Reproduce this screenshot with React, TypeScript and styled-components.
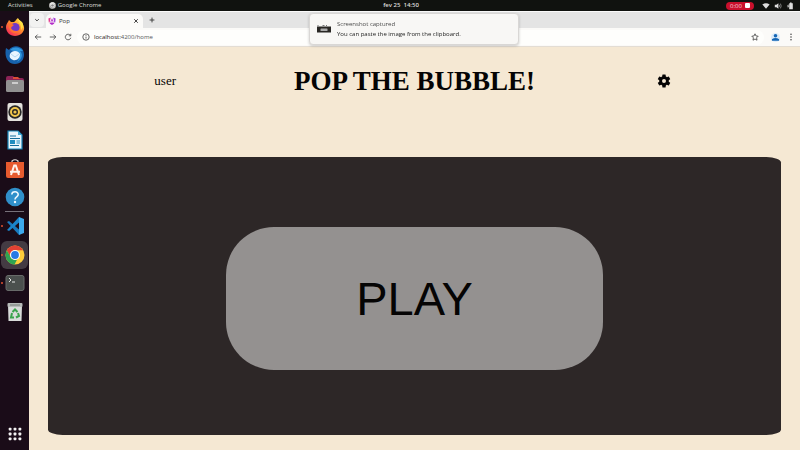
import React from 'react';
import styled, { createGlobalStyle } from 'styled-components';

const GlobalStyle = createGlobalStyle`
  * { box-sizing: border-box; }
  html, body, #root { height: 100%; }
  body { margin: 0; overflow: hidden; font-family: "Open Sans", "Noto Sans", sans-serif; }
  button { border: 0; padding: 0; background: none; color: inherit; font: inherit; cursor: pointer; }
  svg { display: block; }
`;

const Desktop = styled.div`
  display: grid;
  grid-template: 11px minmax(0, 1fr) / 29px minmax(0, 1fr);
  height: 100vh;
  background: #1a0c18;
`;

const TopBar = styled.header`
  grid-column: 1 / -1;
  display: grid;
  grid-template-columns: 1fr auto 1fr;
  align-items: center;
  padding: 0 6px 0 8px;
  background: #10120f;
  color: #dededc;
  font-size: 6px;
  line-height: 11px;
`;

const BarGroup = styled.div<{ $end?: boolean; $gap: number }>`
  display: flex;
  align-items: center;
  justify-content: ${(p) => (p.$end ? 'flex-end' : 'flex-start')};
  gap: ${(p) => p.$gap}px;
`;

const AppMenu = styled.button`
  display: flex;
  align-items: center;
  gap: 2px;
  font-weight: 500;
`;

const Clock = styled.button`
  font-weight: 600;
`;

const Recording = styled.button`
  display: flex;
  align-items: center;
  justify-content: center;
  gap: 3px;
  width: 28px;
  height: 8px;
  margin-right: 4px;
  border-radius: 4px;
  background: #c9102c;
  color: #f6d5da;
  line-height: 8px;
`;

const StopMark = styled.span`
  width: 5px;
  height: 5px;
  border-radius: 1px;
  background: #fff;
`;

const Dock = styled.nav`
  display: flex;
  flex-direction: column;
  align-items: center;
  padding: 2px 0;
`;

const DockGroup = styled.div<{ $height: number }>`
  display: flex;
  flex-direction: column;
  justify-content: space-between;
  height: ${(p) => p.$height}px;
`;

const DockButton = styled.button<{ $active?: boolean; $running?: boolean }>`
  position: relative;
  display: grid;
  place-items: center;
  width: 27px;
  height: 28px;
  border-radius: 6px;
  background: ${(p) => (p.$active ? '#443b43' : 'transparent')};
  &::before {
    content: '';
    display: ${(p) => (p.$running ? 'block' : 'none')};
    position: absolute;
    left: 0;
    top: 13px;
    width: 2px;
    height: 2px;
    border-radius: 1px;
    background: #e0512f;
  }
`;

const DockDivider = styled.hr`
  width: 19px;
  height: 1px;
  margin: 0;
  border: 0;
  background: #77717a;
`;

const DockSpacer = styled.div`
  flex: 1;
`;

const Browser = styled.main`
  display: grid;
  grid-template-rows: 17px 19px minmax(0, 1fr);
  min-width: 0;
`;

const TabStrip = styled.div`
  display: flex;
  align-items: stretch;
  gap: 2px;
  border-top: 1px solid #fafafa;
  background: #e4e4e4;
  color: #333;
`;

const TabSearch = styled.button`
  display: grid;
  place-items: center;
  width: 14px;
  height: 14px;
  margin: 1px 0 0 1px;
  border-radius: 4px;
  background: #f2f2f1;
`;

const Tab = styled.div`
  display: flex;
  align-items: center;
  gap: 3px;
  width: 97px;
  margin-right: 2px;
  margin-top: 2px;
  padding: 0 3px 1px 2px;
  border-radius: 5px 5px 0 0;
  background: #fbfaf8;
  font-size: 6px;
`;

const TabTitle = styled.span`
  flex: 1;
`;

const IconButton = styled.button`
  display: grid;
  place-items: center;
  flex: none;
  width: 9px;
`;

const Toolbar = styled.div`
  display: flex;
  align-items: center;
  padding: 0 5px 0 4px;
  border-bottom: 1px solid #e3ddd4;
  background: #fbfaf8;
  color: #404040;
`;

const NavButtons = styled.div`
  display: flex;
  gap: 6px;
`;

const AddressBar = styled.form`
  display: flex;
  flex: 1;
  align-items: center;
  gap: 4px;
  height: 15px;
  margin: 0 7px 0 5px;
  padding: 0 5px 0 4px;
  border-radius: 8px;
  background: #fefefc;
`;

const AddressField = styled.label`
  display: grid;
  flex: 1;
  align-items: center;
  font-size: 6px;
  line-height: 10px;
`;

const AddressInput = styled.input`
  grid-area: 1 / 1;
  width: 100%;
  min-width: 0;
  padding: 0;
  border: 0;
  outline: 0;
  background: transparent;
  color: transparent;
  caret-color: #333;
  font: inherit;
`;

const AddressText = styled.span`
  grid-area: 1 / 1;
  color: #55585a;
  pointer-events: none;
`;

const Host = styled.span`
  color: #1c1617;
`;

const ToolbarEnd = styled.div`
  display: flex;
  gap: 6px;
`;

const Page = styled.section`
  display: flex;
  flex-direction: column;
  align-items: center;
  padding-bottom: 15px;
  background: #f5e8d3;
  color: #050404;
  font-family: "Liberation Serif", serif;
`;

const PageHeader = styled.header`
  display: grid;
  grid-template-columns: repeat(3, 1fr);
  align-items: center;
  justify-items: center;
  width: 97%;
  height: 68px;
  margin-bottom: 42px;
`;

const UserLink = styled.a`
  color: inherit;
  font-size: 13px;
  text-decoration: none;
`;

const Title = styled.h1`
  margin: 0;
  font-size: 27px;
  line-height: 32px;
  white-space: nowrap;
`;

const Board = styled.div`
  display: grid;
  place-items: center;
  flex: 1;
  width: 95%;
  padding: 4px 0 0;
  border-radius: 2%;
  background: #2d2727;
`;

const PlayButton = styled.button`
  && {
    width: 377px;
    max-width: 80%;
    padding: 44px 0;
    border-radius: 48px;
    background: #949190;
    color: #050404;
    font-family: "Liberation Sans", sans-serif;
    font-size: 47px;
    line-height: 55px;
  }
`;

const Notification = styled.aside`
  position: fixed;
  top: 13px;
  left: 50%;
  display: flex;
  align-items: center;
  gap: 6px;
  width: 210px;
  height: 32px;
  margin-left: -91px;
  padding: 0 7px;
  border: 1px solid #d9d7d5;
  border-radius: 4px;
  background: #f8f7f5;
  box-shadow: 0 1px 3px #0003;
  color: #222;
  font-size: 6px;
  line-height: 10px;
`;

const NoticeText = styled.p`
  margin: 0;
  white-space: nowrap;
`;

const NoticeTitle = styled(NoticeText)`
  color: #4a4a4a;
`;

type IconProps = { size?: number; children: React.ReactNode };

const Icon = ({ size = 20, children }: IconProps) => (
  <svg width={size} height={size} viewBox="0 0 20 20" fill="none" aria-hidden="true">{children}</svg>
);

const Line = ({ d, size = 8, width = 2 }: { d: string; size?: number; width?: number }) => (
  <Icon size={size}><path d={d} stroke="currentColor" strokeWidth={width} /></Icon>
);

const Firefox = () => (
  <Icon>
    <defs>
      <linearGradient id="fox" x1="16" y1="2" x2="4" y2="18" gradientUnits="userSpaceOnUse">
        <stop stopColor="#ffe14a" /><stop offset=".45" stopColor="#ff8a2b" /><stop offset="1" stopColor="#f5285b" />
      </linearGradient>
    </defs>
    <path d="M3 5L4 3 6 5 9 5C11 4 11 2 13 1C14 4 18 5 19 10C20 15 15 19 10 19C5 19 1 15 1 10C1 8 2 6 3 5Z" fill="url(#fox)" />
    <circle cx="10" cy="10.5" r="4.6" fill="#7138c9" />
    <path d="M3 7C5 6 7 7 9 8C8 9 7 9 6 11C7 14 12 15 14 13C13 17 7 17 5 13Z" fill="#ff7130" />
    <path d="M13 2C13 6 17 7 16 13C18 11 19 8 17 5Z" fill="#ffdf43" />
  </Icon>
);

const Thunderbird = () => (
  <Icon>
    <path d="M1 3L4 5C7 0 15 0 18 5C21 12 17 19 10 19C3 19-1 12 1 3Z" fill="#1761ac" />
    <path d="M5 5C9 1 15 2 18 6L15 6C19 10 16 15 12 17C16 12 14 8 9 6Z" fill="#3197df" />
    <path d="M5 9C7 5 13 5 15 9C15 13 12 16 8 15C5 14 4 12 5 9Z" fill="#e9f5ff" />
    <path d="M6 9L10 12 14 9" stroke="#b4d8f3" />
  </Icon>
);

const Files = () => (
  <Icon>
    <path d="M1 4Q1 2 3 2H8L10 4H17Q19 4 19 6V9H1Z" fill="#8d2457" />
    <path d="M8 3H13L15 5H8Z" fill="#dd4b36" />
    <rect x="1" y="6" width="18" height="12" rx="1.5" fill="#919191" />
    <path d="M7 9H13" stroke="#eee" strokeWidth="1.3" />
  </Icon>
);

const Rhythmbox = () => (
  <Icon>
    <rect x="2.5" y="1" width="15" height="18" rx="2" fill="#e4e2dd" />
    <circle cx="10" cy="10" r="6.7" fill="#272625" />
    <circle cx="10" cy="10" r="4" stroke="#f3c74c" strokeWidth="2" />
    <circle cx="10" cy="10" r="1.6" fill="#f3c74c" />
  </Icon>
);

const Writer = () => (
  <Icon>
    <path d="M3 1H13L17 5V19H3Z" fill="#e9f5fb" stroke="#1684b8" strokeWidth="1.2" />
    <path d="M13 1V5H17Z" fill="#45a9d3" />
    <path d="M5 6H11M5 8.5H15M5 15.5H14" stroke="#176e9b" strokeWidth="1.2" />
    <rect x="5" y="10" width="5" height="4" fill="#218dbf" />
    <path d="M11.5 11H15M11.5 13H15" stroke="#218dbf" />
  </Icon>
);

const Software = () => (
  <Icon>
    <path d="M7 4V2Q10-.5 13 2V4" stroke="#dddad7" strokeWidth="1.2" />
    <path d="M1 3H19V17Q19 19 17 19H3Q1 19 1 17Z" fill="#e65a2e" />
    <path d="M6 16L9.2 6.5H10.8L14 16M5 12.8H15" stroke="#fff3ec" strokeWidth="2" />
  </Icon>
);

const Help = () => (
  <Icon>
    <circle cx="10" cy="10" r="9.3" fill="#308fca" />
    <path d="M6.8 7.5C7 3.8 13.4 4 13.2 7.6C13.2 10 10 9.8 10 12.5" stroke="#eef8ff" strokeWidth="1.6" />
    <circle cx="10" cy="15" r="1.2" fill="#eef8ff" />
  </Icon>
);

const Code = () => (
  <Icon>
    <path d="M2 6L4 5 17 16 14 19Z" fill="#1879bd" />
    <path d="M2 14L4 15 17 4 14 1Z" fill="#1a85cb" />
    <path d="M14 1L19 3V17L14 19Z" fill="#3da9ed" />
  </Icon>
);

const Chrome = ({ size = 20, mono = false }: { size?: number; mono?: boolean }) => (
  <Icon size={size}>
    <circle cx="10" cy="10" r="9.5" fill={mono ? '#c4c4c2' : '#ffce3b'} />
    <path d="M1.8 5.2C5.4-1.2 14.6-1.2 18.2 5.2H10A5 5 0 0 0 5.7 12.4Z" fill={mono ? '#e5e5e3' : '#e34134'} />
    <path d="M1.8 5.2L5.8 12.3Q8 15.5 12 14.7L9.5 19.5C2 19-1.5 11.3 1.8 5.2Z" fill={mono ? '#a9a9a7' : '#2fa552'} />
    <circle cx="10" cy="10" r="5" fill="#fff" />
    <circle cx="10" cy="10" r="3.9" fill={mono ? '#888' : '#2879e5'} />
  </Icon>
);

const Terminal = () => (
  <Icon>
    <rect x="1" y="2.5" width="18" height="15" rx="2" fill="#4b504e" stroke="#686b69" />
    <path d="M4 5L6 7 4 9M7 9H10" stroke="#e5e5e5" />
  </Icon>
);

const Trash = () => (
  <Icon>
    <path d="M3 3H17L16.5 19H3.5Z" fill="#d9dcda" />
    <rect x="2.5" y="1" width="15" height="4" rx="1" fill="#b7bbb9" />
    <path d="M5 3H15" stroke="#777c79" />
    <path d="M7.5 10L10 7.5 12.5 10M13 11L14 14 11 15.5M9 15.5H6L7 11" stroke="#3aa44c" strokeWidth="2" />
  </Icon>
);

const AppGrid = () => (
  <Icon size={14}>
    {[1, 8, 15].flatMap((y) => [1, 8, 15].map((x) => (
      <rect key={`${x}-${y}`} x={x} y={y} width="4" height="4" rx="1" fill="#f3f1f2" />
    )))}
  </Icon>
);

const Angular = () => (
  <Icon size={8}>
    <path d="M7 1L1 4 2 14 4 14Z" fill="#e43a8e" />
    <path d="M13 1L19 4 18 14 16 14Z" fill="#a33bd9" />
    <path d="M10 3L14 12H6ZM4 16L10 20 16 16 14 14H6Z" fill="#b52cc9" />
    <path d="M10 8L12 12H8Z" fill="#fff" />
  </Icon>
);

const Gear = () => (
  <svg width="16" height="16" viewBox="0 0 24 24" fill="currentColor" aria-hidden="true">
    <path d="M19.14 12.94c.04-.3.06-.61.06-.94s-.02-.64-.07-.94l2.03-1.58a.49.49 0 0 0 .12-.61l-1.92-3.32a.49.49 0 0 0-.59-.22l-2.39.96a7 7 0 0 0-1.62-.94l-.36-2.54a.48.48 0 0 0-.48-.41h-3.84a.48.48 0 0 0-.47.41l-.36 2.54c-.59.24-1.13.57-1.62.94l-2.39-.96a.48.48 0 0 0-.59.22L2.74 8.87a.47.47 0 0 0 .12.61l2.03 1.58a6 6 0 0 0 0 1.88l-2.03 1.58a.49.49 0 0 0-.12.61l1.92 3.32c.12.22.37.29.59.22l2.39-.96c.5.38 1.03.7 1.62.94l.36 2.54c.05.24.24.41.48.41h3.84c.24 0 .44-.17.47-.41l.36-2.54a7 7 0 0 0 1.62-.94l2.39.96c.22.08.47 0 .59-.22l1.92-3.32a.47.47 0 0 0-.12-.61zM12 15a3 3 0 1 1 0-6 3 3 0 0 1 0 6z" />
  </svg>
);

const pinned = [
  { name: 'Firefox', icon: <Firefox />, running: true },
  { name: 'Thunderbird', icon: <Thunderbird /> },
  { name: 'Files', icon: <Files /> },
  { name: 'Rhythmbox', icon: <Rhythmbox /> },
  { name: 'Writer', icon: <Writer /> },
  { name: 'Software', icon: <Software /> },
  { name: 'Help', icon: <Help /> },
];

const open = [
  { name: 'Code', icon: <Code />, running: true },
  { name: 'Google Chrome', icon: <Chrome />, running: true, active: true },
  { name: 'Terminal', icon: <Terminal />, running: true },
  { name: 'Trash', icon: <Trash /> },
];

export default function App() {
  return (
    <>
      <GlobalStyle />
      <Desktop>
        <TopBar>
          <BarGroup $gap={16}>
            <button>Activities</button>
            <AppMenu><Chrome size={7} mono />Google Chrome</AppMenu>
          </BarGroup>
          <Clock>fev 25&nbsp; 14:50</Clock>
          <BarGroup $end $gap={4}>
            <Recording aria-label="Stop recording">0:00<StopMark /></Recording>
            <Icon size={8}><path d="M1 6Q10 0 19 6L10 17Z" fill="#ddd" /></Icon>
            <Icon size={8}><path d="M2 7H6L11 3V17L6 13H2Z" fill="#ddd" /><path d="M13 7Q15 10 13 13M16 4Q20 10 16 16" stroke="#999" strokeWidth="2" /></Icon>
            <Icon size={8}><path d="M8 3H10V1H14V3H17V18H8Z" fill="#ddd" /><path d="M6 5L2 11H5L4 16L9 9H6Z" fill="#bbb" /></Icon>
          </BarGroup>
        </TopBar>

        <Dock aria-label="Dock">
          <DockGroup $height={198}>
            {pinned.map((a) => (
              <DockButton key={a.name} aria-label={a.name} $running={a.running}>{a.icon}</DockButton>
            ))}
          </DockGroup>
          <DockDivider />
          <DockGroup $height={114}>
            {open.map((a) => (
              <DockButton key={a.name} aria-label={a.name} $running={a.running} $active={a.active}>{a.icon}</DockButton>
            ))}
          </DockGroup>
          <DockSpacer />
          <DockButton aria-label="Show applications"><AppGrid /></DockButton>
        </Dock>

        <Browser>
          <TabStrip>
            <TabSearch aria-label="Search tabs"><Line size={6} width={3} d="M4 7L10 13L16 7" /></TabSearch>
            <Tab>
              <Angular />
              <TabTitle>Pop</TabTitle>
              <IconButton aria-label="Close tab"><Line size={6} width={3} d="M4 4L16 16M16 4L4 16" /></IconButton>
            </Tab>
            <IconButton aria-label="New tab"><Line size={6} width={3} d="M10 2V18M2 10H18" /></IconButton>
          </TabStrip>
          <Toolbar>
            <NavButtons>
              <IconButton aria-label="Back"><Line d="M18 10H3M9 4L3 10L9 16" /></IconButton>
              <IconButton aria-label="Forward"><Line d="M2 10H17M11 4L17 10L11 16" /></IconButton>
              <IconButton aria-label="Reload"><Line d="M16 6A7 7 0 1 0 17 12M17 2V7H12" /></IconButton>
            </NavButtons>
            <AddressBar>
              <IconButton type="button" aria-label="Site information"><Line d="M10 2A8 8 0 1 0 10 18A8 8 0 1 0 10 2M10 9V14M10 5V7" /></IconButton>
              <AddressField>
                <AddressInput aria-label="Address" defaultValue="localhost:4200/home" />
                <AddressText aria-hidden="true"><Host>localhost:</Host>4200/home</AddressText>
              </AddressField>
              <IconButton type="button" aria-label="Bookmark"><Line d="M10 2L12.4 7.4L18 8L14 12L15 18L10 15L5 18L6 12L2 8L7.6 7.4Z" /></IconButton>
            </AddressBar>
            <ToolbarEnd>
              <IconButton aria-label="Profile">
                <Icon size={9}><circle cx="10" cy="10" r="10" fill="#dcebf9" /><circle cx="10" cy="6" r="4" fill="#1466b5" /><path d="M2 17V14Q10 8 18 14V17Z" fill="#1466b5" /></Icon>
              </IconButton>
              <IconButton aria-label="Menu">
                <Icon size={8}>{[3, 10, 17].map((y) => <circle key={y} cx="10" cy={y} r="2" fill="#4a4a4a" />)}</Icon>
              </IconButton>
            </ToolbarEnd>
          </Toolbar>
          <Page>
            <PageHeader>
              <UserLink href="#user">user</UserLink>
              <Title>POP THE BUBBLE!</Title>
              <button aria-label="Settings"><Gear /></button>
            </PageHeader>
            <Board><PlayButton>PLAY</PlayButton></Board>
          </Page>
        </Browser>
      </Desktop>
      <Notification role="status">
        <svg width="14" height="8" viewBox="0 0 28 16" aria-hidden="true">
          <path d="M0 3H28V15H0Z" fill="#292724" /><path d="M2 0V2M11 1H15M18 1H20" stroke="#777" strokeWidth="2" />
          <rect x="7" y="7" width="14" height="5" rx="1" fill="#aaa" />
        </svg>
        <div>
          <NoticeTitle>Screenshot captured</NoticeTitle>
          <NoticeText>You can paste the image from the clipboard.</NoticeText>
        </div>
      </Notification>
    </>
  );
}
